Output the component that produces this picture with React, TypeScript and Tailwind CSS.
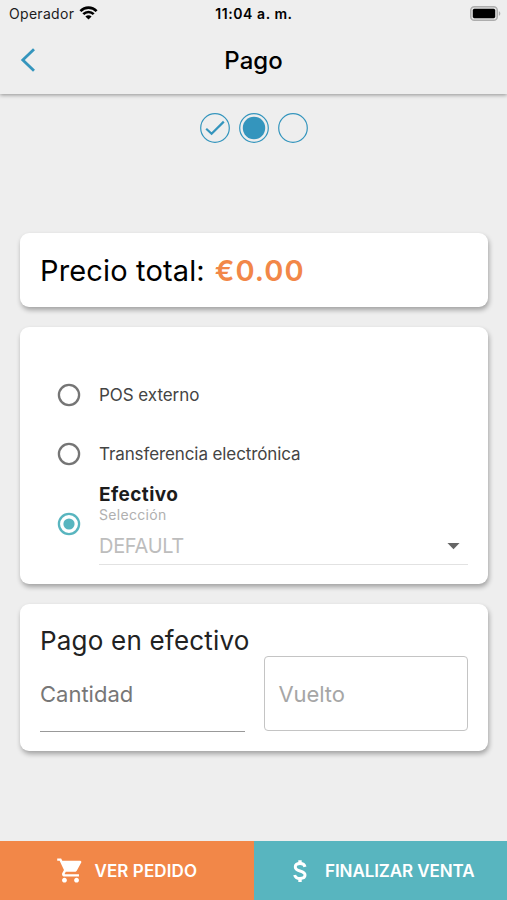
import type { ReactNode } from 'react';
import { MdArrowDropDown, MdShoppingCart } from 'react-icons/md';

function StatusBar() {
  return (
    <div className="grid h-7 grid-cols-3 items-center pr-[6px] pl-[9px] text-sm leading-none text-[#1c1c1c]">
      <div className="flex items-center gap-[5px]">
        <span className="tracking-[0.3px]">Operador</span>
        <svg width="19" height="14" viewBox="0 0 18 14" fill="none" stroke="#000" strokeWidth="2.6" className="mb-0.5">
          <path d="M0.9 5.1C5.4 0.5 12.6 0.5 17.1 5.1" />
          <path d="M3.8 8.2C6.7 5.3 11.3 5.3 14.2 8.2" />
          <path d="M9 13.5L5.9 10.4C7.6 8.8 10.4 8.8 12.1 10.4Z" fill="#000" stroke="none" />
        </svg>
      </div>
      <span className="pr-0.5 text-center font-semibold tracking-[0.55px] whitespace-nowrap text-black">11:04 a. m.</span>
      <svg width="31" height="15" viewBox="0 0 31 15" className="mb-0.5 justify-self-end">
        <rect x="0.75" y="0.75" width="26.5" height="13.5" rx="3.6" fill="#e2e2e2" stroke="#adadad" strokeWidth="1.5" />
        <rect x="2.8" y="2.8" width="22.4" height="9.4" rx="1.6" fill="#000" />
        <path d="M28.8 5.2C30.8 5.8 30.8 9.2 28.8 9.8Z" fill="#adadad" />
      </svg>
    </div>
  );
}

function Header() {
  return (
    <header className="h-[94px] bg-[#eeeeee] shadow-[0_1px_4px_rgba(0,0,0,0.4)]">
      <StatusBar />
      <div className="grid h-16 grid-cols-3 items-center px-5">
        <svg width="16" height="24" viewBox="0 0 16 24" fill="none" stroke="#3495bd" strokeWidth="2.8">
          <path d="M14 1.2L2.8 12L14 22.8" />
        </svg>
        <h1 className="pt-px text-center text-2xl font-medium text-black">Pago</h1>
      </div>
    </header>
  );
}

function Steps() {
  return (
    <div className="flex justify-center gap-[9px] pt-[19px]">
      <svg width="30" height="30" viewBox="0 0 30 30" fill="none" stroke="#3495bd">
        <circle cx="15" cy="15" r="14.3" strokeWidth="1.2" />
        <path d="M6.2 15.8L11.6 20.8L23.8 8.6" strokeWidth="2.2" />
      </svg>
      <svg width="30" height="30" viewBox="0 0 30 30" fill="none" stroke="#3495bd">
        <circle cx="15" cy="15" r="14.3" strokeWidth="1.2" />
        <circle cx="15" cy="15" r="11.2" fill="#3495bd" stroke="none" />
      </svg>
      <svg width="30" height="30" viewBox="0 0 30 30" fill="none" stroke="#3495bd">
        <circle cx="15" cy="15" r="14.3" strokeWidth="1.2" />
      </svg>
    </div>
  );
}

function Card({ className, children }: { className: string; children?: ReactNode }) {
  return (
    <section className={`mr-[19px] ml-5 rounded-[9px] bg-white shadow-[1px_3px_5px_rgba(0,0,0,0.32)] ${className}`}>
      {children}
    </section>
  );
}

function Radio({ checked = false }: { checked?: boolean }) {
  return (
    <svg width="24" height="24" viewBox="0 0 24 24" className="shrink-0" fill="none">
      <circle cx="12" cy="12" r="10.1" stroke={checked ? '#58b5bf' : '#757575'} strokeWidth="2.3" />
      {checked && <circle cx="12" cy="12" r="5.6" fill="#58b5bf" />}
    </svg>
  );
}

function PaymentMethods() {
  return (
    <Card className="mt-5 h-[257px] pt-[38px] pr-5 pl-[37px]">
      <label className="flex h-[59px] items-center gap-[18px]">
        <Radio />
        <span className="pt-0.5 text-[17px] tracking-[-0.05px] text-[#444]">POS externo</span>
      </label>
      <label className="flex h-[59px] items-center gap-[18px]">
        <Radio />
        <span className="pt-0.5 text-[17px] tracking-[-0.1px] text-[#444]">Transferencia electrónica</span>
      </label>
      <div className="flex h-[82px] items-center gap-[18px]">
        <Radio checked />
        <div className="h-[82px] flex-1 border-b border-[#e2e2e2]">
          <p className="h-[22px] text-[19px] leading-6 font-bold tracking-[0.4px] text-[#1c1c1c]">Efectivo</p>
          <p className="h-[19px] text-sm leading-[19px] tracking-[0.3px] text-[#b0b0b0]">Selección</p>
          <div className="flex h-[43px] items-center justify-between">
            <span className="text-xl tracking-[-0.3px] text-[#bdbdbd]">DEFAULT</span>
            <MdArrowDropDown className="size-[29px] text-[#666]" />
          </div>
        </div>
      </div>
    </Card>
  );
}

function CashPayment() {
  return (
    <Card className="mt-5 h-[147px] px-5 pt-[18px]">
      <h2 className="h-[34px] text-[26px] leading-[37px] tracking-[0.2px] whitespace-nowrap text-[#222]">
        Pago en efectivo
      </h2>
      <div className="grid grid-cols-2 gap-[19px]">
        <div className="flex h-[76px] items-center border-b border-[#999] pt-px text-[22px] text-[#777]">Cantidad</div>
        <div className="flex h-[75px] items-center rounded-[4px] border border-[#c4c4c4] px-[14px] pt-px text-[22px] tracking-[-0.1px] text-[#a6a6a6]">
          Vuelto
        </div>
      </div>
    </Card>
  );
}

export default function App() {
  return (
    <div className="flex h-[900px] w-[507px] flex-col overflow-hidden bg-[#eeeeee] font-['Inter','Liberation_Sans',sans-serif]">
      <Header />
      <main className="flex-1">
        <Steps />
        <Card className="mt-[90px] flex h-[74px] items-center gap-[10px] px-5 pt-px text-[29px] whitespace-nowrap text-black">
          <span className="tracking-[0.15px]">Precio total:</span>
          <span className="font-semibold tracking-[1px] text-[#f28748]">€0.00</span>
        </Card>
        <PaymentMethods />
        <CashPayment />
      </main>
      <footer className="grid h-[59px] grid-cols-2 text-[17px] font-semibold text-white">
        <button className="flex items-center justify-center gap-[9px] bg-[#f28748]">
          <MdShoppingCart className="size-[29px]" />
          <span className="pt-0.5 tracking-[0.1px]">VER PEDIDO</span>
        </button>
        <button className="flex items-center justify-center gap-[11px] bg-[#58b5bf]">
          <svg width="28" height="28" viewBox="0 0 28 28" fill="none" stroke="#fff" strokeWidth="3">
            <path d="M19 9.8C18.5 7.6 16.6 6.6 14 6.6C11.2 6.6 9.3 7.9 9.3 10C9.3 12.3 11 13.2 14 14C17.2 14.8 19 15.8 19 18.1C19 20.3 17.1 21.5 14 21.5C11.2 21.5 9.2 20.4 8.7 18" />
            <path d="M14 3.2V7M14 21V25" strokeWidth="3.4" />
          </svg>
          <span className="pt-0.5 tracking-[-0.1px]">FINALIZAR VENTA</span>
        </button>
      </footer>
    </div>
  );
}
